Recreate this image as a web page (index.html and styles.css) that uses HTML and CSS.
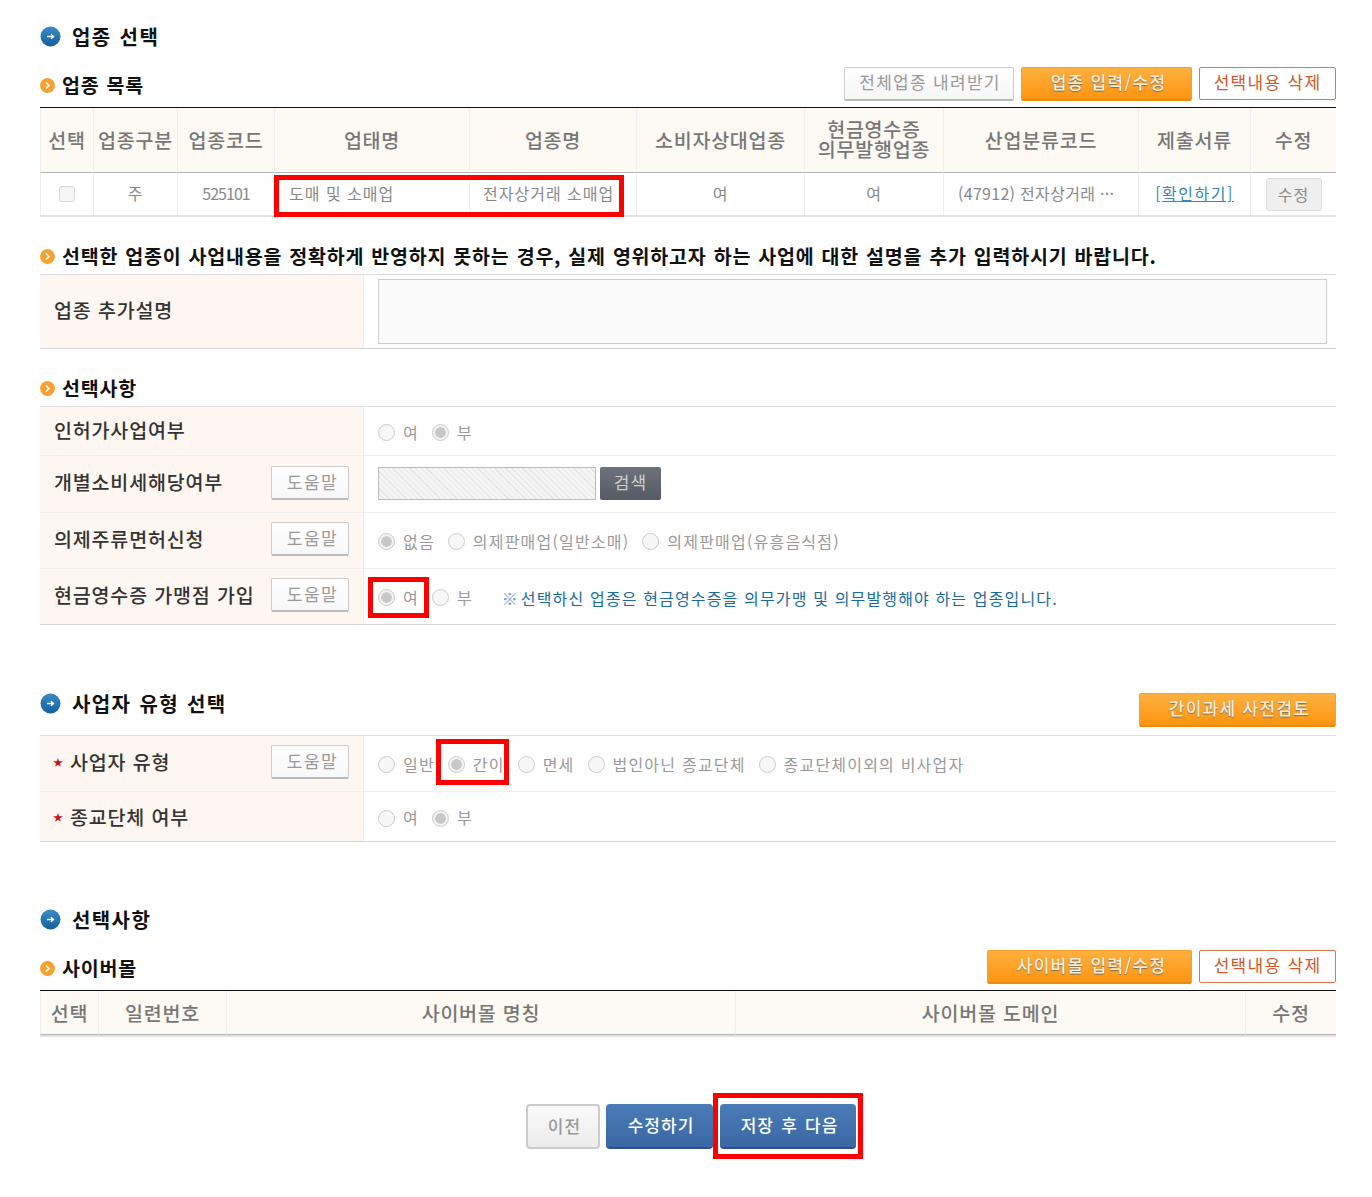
FILE: index.html
```html
<!DOCTYPE html>
<html lang="ko">
<head>
<meta charset="utf-8">
<title>업종 선택</title>
<link rel="stylesheet" href="styles.css">
</head>
<body>
<main class="page">
  <h2 class="h-main first">
    <svg class="ico-blue" viewBox="0 0 21 21"><defs><linearGradient id="b" x1="0" y1="0" x2="0" y2="1"><stop offset="0" stop-color="#3a8cc6"/><stop offset="1" stop-color="#14609f"/></linearGradient></defs><circle cx="10.5" cy="10.5" r="10" fill="url(#b)"/><path d="M7 10.5h6.5M11 8.2l2.6 2.3-2.6 2.3" fill="none" stroke="#fff" stroke-width="1.3"/></svg>
    <span>업종 선택</span>
  </h2>

  <div class="toolbar">
    <h3 class="h-sub"><svg class="ico-orange" viewBox="0 0 15 15"><circle cx="7.5" cy="7.5" r="7.4" fill="#f6a130"/><path d="M6 4.5l3 3-3 3" fill="none" stroke="#fff" stroke-width="1.6"/></svg><span>업종 목록</span></h3>
    <div class="actions">
      <button class="btn btn-light btn-w170">전체업종 내려받기</button>
      <button class="btn btn-orange btn-w171">업종 입력/수정</button>
      <button class="btn btn-outline btn-w137">선택내용 삭제</button>
    </div>
  </div>

  <table class="grid">
    <colgroup><col class="c53"><col class="c84"><col class="c97"><col class="c195"><col class="c167"><col class="c168"><col class="c139"><col class="c195"><col class="c112"><col class="c86"></colgroup>
    <thead><tr><th>선택</th><th>업종구분</th><th>업종코드</th><th>업태명</th><th>업종명</th><th>소비자상대업종</th><th class="two">현금영수증<br>의무발행업종</th><th>산업분류코드</th><th>제출서류</th><th>수정</th></tr></thead>
    <tbody><tr>
      <td><input class="chk" type="checkbox" disabled></td><td>주</td><td class="num">525101</td>
      <td class="left">도매 및 소매업</td><td class="left l13">전자상거래 소매업</td><td>여</td><td>여</td>
      <td class="left code">(47912) 전자상거래 ···</td><td><a class="link" href="#">[확인하기]</a></td>
      <td><button class="btn-edit">수정</button></td>
    </tr></tbody>
  </table>

  <h3 class="h-sub gap-a"><svg class="ico-orange" viewBox="0 0 15 15"><circle cx="7.5" cy="7.5" r="7.4" fill="#f6a130"/><path d="M6 4.5l3 3-3 3" fill="none" stroke="#fff" stroke-width="1.6"/></svg><span>선택한 업종이 사업내용을 정확하게 반영하지 못하는 경우, 실제 영위하고자 하는 사업에 대한 설명을 추가 입력하시기 바랍니다.</span></h3>
  <div class="form">
    <div class="frow r74"><div class="lab">업종 추가설명</div><div class="val"><div class="area"></div></div></div>
  </div>

  <h3 class="h-sub gap-b"><svg class="ico-orange" viewBox="0 0 15 15"><circle cx="7.5" cy="7.5" r="7.4" fill="#f6a130"/><path d="M6 4.5l3 3-3 3" fill="none" stroke="#fff" stroke-width="1.6"/></svg><span>선택사항</span></h3>
  <div class="form">
    <div class="frow r49"><div class="lab">인허가사업여부</div><div class="val dn"><label class="opt"><input type="radio" disabled>여</label><label class="opt"><input type="radio" disabled checked>부</label></div></div>
    <div class="frow r57"><div class="lab">개별소비세해당여부<button class="help">도움말</button></div><div class="val up"><div class="hatch"></div><button class="btn-search">검색</button></div></div>
    <div class="frow r56"><div class="lab">의제주류면허신청<button class="help">도움말</button></div><div class="val"><label class="opt"><input type="radio" disabled checked>없음</label><label class="opt"><input type="radio" disabled>의제판매업(일반소매)</label><label class="opt"><input type="radio" disabled>의제판매업(유흥음식점)</label></div></div>
    <div class="frow r55"><div class="lab">현금영수증 가맹점 가입<button class="help">도움말</button></div><div class="val"><label class="opt"><input type="radio" disabled checked>여</label><label class="opt"><input type="radio" disabled>부</label><span class="note"><i>※</i>선택하신 업종은 현금영수증을 의무가맹 및 의무발행해야 하는 업종입니다.</span></div></div>
  </div>

  <div class="h-row">
    <h2 class="h-main">
      <svg class="ico-blue" viewBox="0 0 21 21"><circle cx="10.5" cy="10.5" r="10" fill="url(#b)"/><path d="M7 10.5h6.5M11 8.2l2.6 2.3-2.6 2.3" fill="none" stroke="#fff" stroke-width="1.3"/></svg>
      <span>사업자 유형 선택</span>
    </h2>
    <button class="btn btn-orange btn-w197">간이과세 사전검토</button>
  </div>
  <div class="form">
    <div class="frow r56"><div class="lab"><b class="star">★</b>사업자 유형<button class="help">도움말</button></div><div class="val"><label class="opt"><input type="radio" disabled>일반</label><label class="opt"><input type="radio" disabled checked>간이</label><label class="opt"><input type="radio" disabled>면세</label><label class="opt"><input type="radio" disabled>법인아닌 종교단체</label><label class="opt"><input type="radio" disabled>종교단체이외의 비사업자</label></div></div>
    <div class="frow r50"><div class="lab"><b class="star">★</b>종교단체 여부</div><div class="val dn"><label class="opt"><input type="radio" disabled>여</label><label class="opt"><input type="radio" disabled checked>부</label></div></div>
  </div>

  <h2 class="h-main gap-c">
    <svg class="ico-blue" viewBox="0 0 21 21"><circle cx="10.5" cy="10.5" r="10" fill="url(#b)"/><path d="M7 10.5h6.5M11 8.2l2.6 2.3-2.6 2.3" fill="none" stroke="#fff" stroke-width="1.3"/></svg>
    <span>선택사항</span>
  </h2>
  <div class="toolbar">
    <h3 class="h-sub"><svg class="ico-orange" viewBox="0 0 15 15"><circle cx="7.5" cy="7.5" r="7.4" fill="#f6a130"/><path d="M6 4.5l3 3-3 3" fill="none" stroke="#fff" stroke-width="1.6"/></svg><span>사이버몰</span></h3>
    <div class="actions">
      <button class="btn btn-orange btn-w205">사이버몰 입력/수정</button>
      <button class="btn btn-outline btn-w137">선택내용 삭제</button>
    </div>
  </div>
  <table class="grid cyber">
    <colgroup><col class="c58"><col class="c128"><col class="c509"><col class="c510"><col class="c91"></colgroup>
    <thead><tr><th>선택</th><th>일련번호</th><th>사이버몰 명칭</th><th>사이버몰 도메인</th><th>수정</th></tr></thead>
  </table>

  <div class="foot">
    <button class="fbtn prev">이전</button>
    <button class="fbtn blue w107">수정하기</button>
    <button class="fbtn blue w136">저장 후 다음</button>
  </div>

  <div class="mark m1"></div>
  <div class="mark m2"></div>
  <div class="mark m3"></div>
  <div class="mark m4"></div>
</main>
</body>
</html>
```
FILE: styles.css
```css
* { box-sizing: border-box; }
html, body { margin: 0; background: #fff; }
body { font-family: "Noto Sans CJK KR", "Noto Sans", sans-serif; color: #333; }
.page { position: relative; width: 1372px; height: 1197px; padding: 24px 36px 0 40px; }
h2, h3 { margin: 0; }

.h-main { display: flex; align-items: center; gap: 11px; height: 24px; font-size: 20px; font-weight: 700; color: #111; line-height: 24px; }
.h-main span { letter-spacing: 1.4px; word-spacing: 1px; padding-top: 1px; }
.ico-blue { width: 21px; height: 21px; flex: none; margin-top: 0; }
.h-sub { display: flex; align-items: center; gap: 7px; font-size: 19.5px; font-weight: 700; color: #111; line-height: 24px; white-space: nowrap; }
.h-sub span { letter-spacing: .8px; word-spacing: .8px; }
.ico-orange { width: 15px; height: 15px; flex: none; }

.toolbar { display: flex; justify-content: space-between; align-items: flex-start; height: 40px; margin-top: 19px; }
.toolbar .h-sub { padding-top: 6px; }
.actions { display: flex; gap: 7px; }
.btn { height: 34px; font: inherit; font-size: 17px; letter-spacing: 1.3px; line-height: 28px; padding: 0 0 3px; border-radius: 2px; cursor: pointer; white-space: nowrap; }
.btn-w170 { width: 170px; }
.btn-w171 { width: 171px; }
.btn-w137 { width: 137px; height: 33px; }
.btn-w197 { width: 197px; }
.btn-w205 { width: 205px; }
.btn-light { background: linear-gradient(#fff, #f6f6f6); color: #999; border: 1px solid #ccc; border-bottom: 2px solid #bbb; padding-left: 2px; }
.btn-orange { background: linear-gradient(#ffb03f, #fd9511); color: #f4eee2; font-weight: 500; border: 1px solid #f9a02c; border-bottom: 2px solid #e98d12; text-shadow: 0 1px 1px #7d6f52; padding-left: 4px; }
.btn-outline { background: #fff; color: #d0592a; border: 1px solid #d77a48; }

.grid { width: 1296px; border-collapse: separate; border-spacing: 0; table-layout: fixed; border-top: 1px solid #111; border-bottom: 2px solid #e4e4e4; }
.c53 { width: 53px; } .c84 { width: 84px; } .c97 { width: 97px; } .c195 { width: 195px; } .c167 { width: 167px; } .c168 { width: 168px; } .c139 { width: 139px; } .c112 { width: 112px; } .c86 { width: 86px; }
.c58 { width: 58px; } .c128 { width: 128px; } .c509 { width: 509px; } .c510 { width: 510px; } .c91 { width: 91px; }
.grid th { height: 65px; padding: 0 0 1px; background: #fdf9f3; color: #777; font-size: 19.5px; letter-spacing: .8px; font-weight: 500; line-height: 21px; border-left: 1px solid #efefef; border-bottom: 1px solid #b5b5b5; white-space: nowrap; text-align: center; }
.grid th.two { line-height: 20px; padding-bottom: 2px; }
.grid td { height: 42px; padding: 0 0 2px; color: #888; font-size: 16px; letter-spacing: 1px; font-weight: 400; text-align: center; border-left: 1px solid #efefef; white-space: nowrap; overflow: hidden; }
.grid td.left { text-align: left; padding-left: 14px; }
.grid td.l13 { padding-left: 13px; }
.grid td.num { letter-spacing: -1px; }
.grid td.code { letter-spacing: .3px; }
.chk { appearance: none; display: block; width: 16px; height: 16px; margin: 2px auto 0; background: #f6f6f6; border: 1px solid #d5d5d5; border-radius: 3px; }
.link { color: #3a85b5; text-decoration: underline; letter-spacing: 1.5px; }
.btn-edit { display: block; width: 56px; height: 33px; margin: 2px auto 0; font: inherit; font-size: 16px; letter-spacing: 1px; color: #888; background: #efefef; border: 1px solid #ddd; border-radius: 3px; padding: 0; }
.cyber th { height: 44px; }

.gap-a { margin-top: 23px; height: 34px; padding-bottom: 2px; }
.gap-b { margin-top: 23px; height: 34px; padding-bottom: 2px; }
.gap-c { margin-top: 65px; }

.form { border-top: 1px solid #ddd; border-bottom: 1px solid #d5d5d5; }
.frow { display: flex; border-bottom: 1px solid #efefef; }
.frow:last-child { border-bottom: 0; }
.r74 { height: 73px; } .r49 { height: 49px; } .r57 { height: 57px; } .r56 { height: 56px; } .r55 { height: 55px; } .r50 { height: 49px; }
.lab { display: flex; align-items: center; justify-content: space-between; width: 324px; flex: none; padding: 0 14px 5px; background: #fef6f0; border-right: 1px solid #eee; font-size: 19.5px; letter-spacing: .85px; font-weight: 500; color: #333; white-space: nowrap; }
.r49 .lab { padding-bottom: 3px; }
.r50 .lab { padding-bottom: 1px; }
.lab:has(.star) { justify-content: flex-start; padding-left: 13px; }
.lab:has(.star) .help { margin-left: auto; }
.star { font-size: 10px; color: #c8161d; width: 17px; font-weight: 400; flex: none; letter-spacing: 0; }
.help { width: 78px; height: 34px; margin-top: 2px; flex: none; font: inherit; font-size: 17px; letter-spacing: 1.5px; font-weight: 400; color: #999; background: linear-gradient(#fff, #f8f8f8); border: 1px solid #ccc; border-bottom: 2px solid #bbb; border-radius: 2px; padding: 0 0 2px 5px; }
.val { display: flex; align-items: center; gap: 4px; padding-left: 14px; flex: 1; }
.dn { padding-top: 1px; }
.up { padding-bottom: 2px; }
.area { width: 949px; height: 65px; border: 1px solid #ccc; background: #fafafa; }
.hatch { width: 218px; height: 33px; border: 1px solid #bbb; background: repeating-linear-gradient(45deg, #f4f4f4 0 3px, #e6e6e6 3px 4px); }
.btn-search { width: 61px; height: 33px; font: inherit; font-size: 17px; letter-spacing: 1px; color: #cfcfcf; background: linear-gradient(#6d727c, #555a64); border: 0; border-radius: 2px; padding: 0 0 4px; }

.opt { display: inline-flex; align-items: center; gap: 8px; margin-right: 9px; font-size: 16px; letter-spacing: 1.2px; color: #999; white-space: nowrap; }
.opt input { appearance: none; width: 17px; height: 17px; margin: 2px 0 0; border: 1px solid #ccc; border-radius: 50%; background: #f7f7f7; flex: none; }
.opt input:checked { background: radial-gradient(circle, #c8c8c8 0 5px, #f2f2f2 5.5px); }
.note { margin: 3px 0 0 16px; font-size: 16px; letter-spacing: 1.15px; color: #1b6a9c; white-space: nowrap; }
.note i { display: inline-block; width: 19px; font-style: normal; letter-spacing: 0; color: #6a9cc4; }

.h-row { display: flex; justify-content: space-between; align-items: flex-start; height: 44px; margin-top: 66px; }
.h-row .btn { margin-top: 2px; }

.foot { display: flex; justify-content: flex-start; gap: 6px; margin-top: 67px; padding-left: 486px; }
.fbtn { height: 45px; font: inherit; font-size: 17px; font-weight: 500; letter-spacing: 1px; word-spacing: 1.5px; border-radius: 4px; padding: 0 0 2px 3px; cursor: pointer; }
.prev { width: 74px; background: linear-gradient(#fafafa, #ececec); color: #999; border: 2px solid #ccc; }
.blue { background: linear-gradient(#4a7db9, #3a67a3); color: #fff; border: 0; border-bottom: 2px solid #2a5288; }
.w107 { width: 107px; }
.w136 { width: 136px; margin-left: 1px; }

.mark { position: absolute; border: 5px solid #f00; pointer-events: none; }
.m1 { left: 274px; top: 175px; width: 350px; height: 42px; }
.m2 { left: 368px; top: 577px; width: 61px; height: 41px; }
.m3 { left: 436px; top: 739px; width: 73px; height: 46px; }
.m4 { left: 713px; top: 1093px; width: 150px; height: 66px; }
```
